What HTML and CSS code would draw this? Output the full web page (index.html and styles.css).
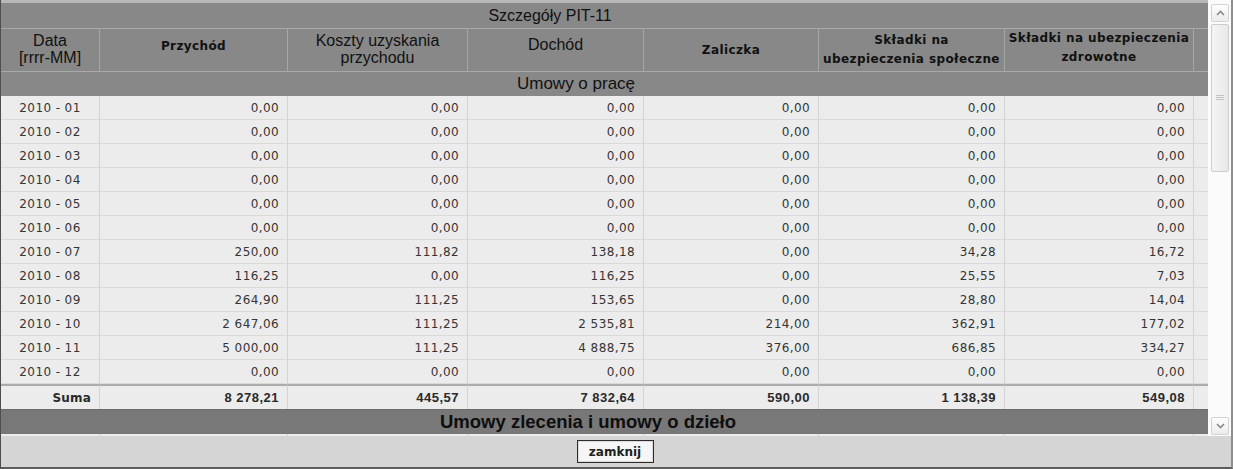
FILE: index.html
```html
<!DOCTYPE html>
<html lang="pl">
<head>
<meta charset="utf-8">
<title>Szczegóły PIT-11</title>
<link rel="stylesheet" href="styles.css">
</head>
<body>
<div class="window">
  <div class="main">
    <div class="grid">
      <table class="pit">
        <colgroup>
          <col class="w1"><col class="w2"><col class="w3"><col class="w4"><col class="w5"><col class="w6"><col class="w7"><col class="w8">
        </colgroup>
        <tbody>
          <tr class="title"><td colspan="8">Szczegóły PIT-11</td></tr>
          <tr class="head">
            <td class="big">Data<br>[rrrr-MM]</td>
            <td class="bold up">Przychód</td>
            <td class="big">Koszty uzyskania<br>przychodu</td>
            <td class="big up2">Dochód</td>
            <td class="bold">Zaliczka</td>
            <td class="bold">Składki na<br>ubezpieczenia społeczne</td>
            <td class="bold top">Składki na ubezpieczenia<br>zdrowotne</td>
            <td></td>
          </tr>
          <tr class="section"><td colspan="8">Umowy o pracę</td></tr>
          <tr class="row"><td>2010 - 01</td><td>0,00</td><td>0,00</td><td>0,00</td><td>0,00</td><td>0,00</td><td>0,00</td><td></td></tr>
          <tr class="row"><td>2010 - 02</td><td>0,00</td><td>0,00</td><td>0,00</td><td>0,00</td><td>0,00</td><td>0,00</td><td></td></tr>
          <tr class="row"><td>2010 - 03</td><td>0,00</td><td>0,00</td><td>0,00</td><td>0,00</td><td>0,00</td><td>0,00</td><td></td></tr>
          <tr class="row"><td>2010 - 04</td><td>0,00</td><td>0,00</td><td>0,00</td><td>0,00</td><td>0,00</td><td>0,00</td><td></td></tr>
          <tr class="row"><td>2010 - 05</td><td>0,00</td><td>0,00</td><td>0,00</td><td>0,00</td><td>0,00</td><td>0,00</td><td></td></tr>
          <tr class="row"><td>2010 - 06</td><td>0,00</td><td>0,00</td><td>0,00</td><td>0,00</td><td>0,00</td><td>0,00</td><td></td></tr>
          <tr class="row"><td>2010 - 07</td><td>250,00</td><td>111,82</td><td>138,18</td><td>0,00</td><td>34,28</td><td>16,72</td><td></td></tr>
          <tr class="row"><td>2010 - 08</td><td>116,25</td><td>0,00</td><td>116,25</td><td>0,00</td><td>25,55</td><td>7,03</td><td></td></tr>
          <tr class="row"><td>2010 - 09</td><td>264,90</td><td>111,25</td><td>153,65</td><td>0,00</td><td>28,80</td><td>14,04</td><td></td></tr>
          <tr class="row"><td>2010 - 10</td><td>2 647,06</td><td>111,25</td><td>2 535,81</td><td>214,00</td><td>362,91</td><td>177,02</td><td></td></tr>
          <tr class="row"><td>2010 - 11</td><td>5 000,00</td><td>111,25</td><td>4 888,75</td><td>376,00</td><td>686,85</td><td>334,27</td><td></td></tr>
          <tr class="row"><td>2010 - 12</td><td>0,00</td><td>0,00</td><td>0,00</td><td>0,00</td><td>0,00</td><td>0,00</td><td></td></tr>
          <tr class="sum"><td>Suma</td><td>8 278,21</td><td>445,57</td><td>7 832,64</td><td>590,00</td><td>1 138,39</td><td>549,08</td><td></td></tr>
          <tr class="section dark"><td colspan="8">Umowy zlecenia i umowy o dzieło</td></tr>
          <tr class="row"><td></td><td></td><td></td><td></td><td></td><td></td><td></td><td></td></tr>
        </tbody>
      </table>
    </div>
    <div class="scroll">
      <div class="sb-btn">
        <svg width="9" height="6" viewBox="0 0 9 6"><polyline points="1,5 4.5,1.5 8,5" fill="none" stroke="#8a8a8a" stroke-width="1.6"/></svg>
      </div>
      <div class="thumb">
        <svg width="8" height="6" viewBox="0 0 8 6"><path d="M0 0.5H8M0 2.5H8M0 4.5H8" stroke="#c4c4c4" stroke-width="1"/></svg>
      </div>
      <div class="track"></div>
      <div class="sb-btn">
        <svg width="9" height="6" viewBox="0 0 9 6"><polyline points="1,1 4.5,4.5 8,1" fill="none" stroke="#8a8a8a" stroke-width="1.6"/></svg>
      </div>
    </div>
  </div>
  <div class="footer">
    <button class="close" type="button">zamknij</button>
  </div>
</div>
</body>
</html>
```

FILE: styles.css
```css
* { box-sizing: border-box; }
html, body { margin: 0; padding: 0; }
body {
  width: 1233px;
  height: 469px;
  overflow: hidden;
  background: #ffffff;
  font-family: "DejaVu Sans", sans-serif;
}
.window {
  width: 1233px;
  height: 469px;
  display: flex;
  flex-direction: column;
  border-left: 1px solid #4e4e4e;
  border-right: 2px solid #8e8e8e;
  border-bottom: 2px solid #5c5c5c;
  background: #ffffff;
}
.main {
  display: flex;
  height: 436px;
}
.grid {
  width: 1207px;
  height: 436px;
  overflow: hidden;
  border-top: 3px solid #b8b8b8;
  background: #ececec;
}
.pit {
  width: 1207px;
  table-layout: fixed;
  border-collapse: separate;
  border-spacing: 0;
}
.w1 { width: 99px; }
.w2 { width: 188px; }
.w3 { width: 180px; }
.w4 { width: 176px; }
.w5 { width: 175px; }
.w6 { width: 186px; }
.w7 { width: 189px; }
.w8 { width: 14px; }
.pit td { padding: 0; overflow: hidden; white-space: nowrap; }

.title td {
  height: 26px;
  background: #888888;
  border-bottom: 1px solid #a9a9a9;
  text-align: center;
  padding-right: 109px;
  font-family: "Liberation Sans", Arial, sans-serif;
  font-size: 16px;
  color: #111111;
}
.head td {
  height: 42px;
  background: #888888;
  border-bottom: 1px solid #a9a9a9;
  border-right: 1px solid #a6a6a6;
  text-align: center;
  vertical-align: middle;
  color: #111111;
}
.head td:last-child { border-right: 0; }
.head .big {
  font-family: "Liberation Sans", Arial, sans-serif;
  font-size: 16px;
  line-height: 17px;
  padding-bottom: 2px;
}
.head .bold {
  font-weight: bold;
  font-size: 12px;
  letter-spacing: 0.4px;
  line-height: 19px;
}
.head .up { padding-bottom: 8px; }
.head .up2 { padding-bottom: 12px; }
.head .top { padding-bottom: 4px; }

.section td {
  height: 24px;
  background: #888888;
  text-align: center;
  padding-right: 57px;
  font-family: "Liberation Sans", Arial, sans-serif;
  font-size: 17px;
  color: #111111;
}
.section.dark td {
  height: 25px;
  background: #787878;
  border-top: 1px solid #6a6a6a;
  padding-right: 33px;
  font-weight: bold;
  font-size: 18.5px;
  color: #0e0e0e;
}

.row td {
  height: 24px;
  background: #ececec;
  border-bottom: 1px solid #dadada;
  border-right: 1px solid #d4d4d4;
  text-align: right;
  padding-right: 8px;
  font-size: 12px;
  letter-spacing: 0.4px;
  color: #353535;
}
.row td:first-child { text-align: center; padding-right: 0; }
.row td:last-child { border-right: 0; }

.sum td {
  height: 25px;
  background: #ececec;
  border-top: 2px solid #ababab;
  border-right: 1px solid #d4d4d4;
  text-align: right;
  padding-right: 8px;
  font-family: "Liberation Sans", Arial, sans-serif;
  font-weight: bold;
  font-size: 13px;
  letter-spacing: 0.5px;
  color: #2a2a2a;
}
.sum td:first-child {
  font-family: "DejaVu Sans", sans-serif;
  font-size: 12px;
  letter-spacing: 0.2px;
}
.sum td:last-child { border-right: 0; }

.scroll {
  width: 23px;
  height: 436px;
  background: #fbfbfb;
  padding: 4px 2px 1px 3px;
  display: flex;
  flex-direction: column;
}
.sb-btn {
  height: 18px;
  flex: none;
  border: 1px solid #d2d2d2;
  border-radius: 2px;
  background: linear-gradient(#fdfdfd, #ececec);
  display: flex;
  align-items: center;
  justify-content: center;
}
.thumb {
  margin-top: 2px;
  height: 148px;
  flex: none;
  border: 1px solid #cdcdcd;
  border-radius: 2px;
  background: linear-gradient(90deg, #f4f4f4, #e9e9e9);
  display: flex;
  align-items: center;
  justify-content: center;
}
.track { flex: 1; }

.footer {
  height: 31px;
  background: #d5d5d5;
  display: flex;
  justify-content: center;
  align-items: flex-start;
  padding-top: 4px;
}
.close {
  width: 77px;
  height: 23px;
  margin: 0 0 0 -2px;
  padding: 0;
  border: 1px solid #2c2c2c;
  border-radius: 0;
  box-shadow: inset 0 0 0 1px #dcdcdc;
  background: #f6f6f6;
  font-family: "DejaVu Sans", sans-serif;
  font-weight: bold;
  font-size: 12px;
  color: #222222;
}
```
